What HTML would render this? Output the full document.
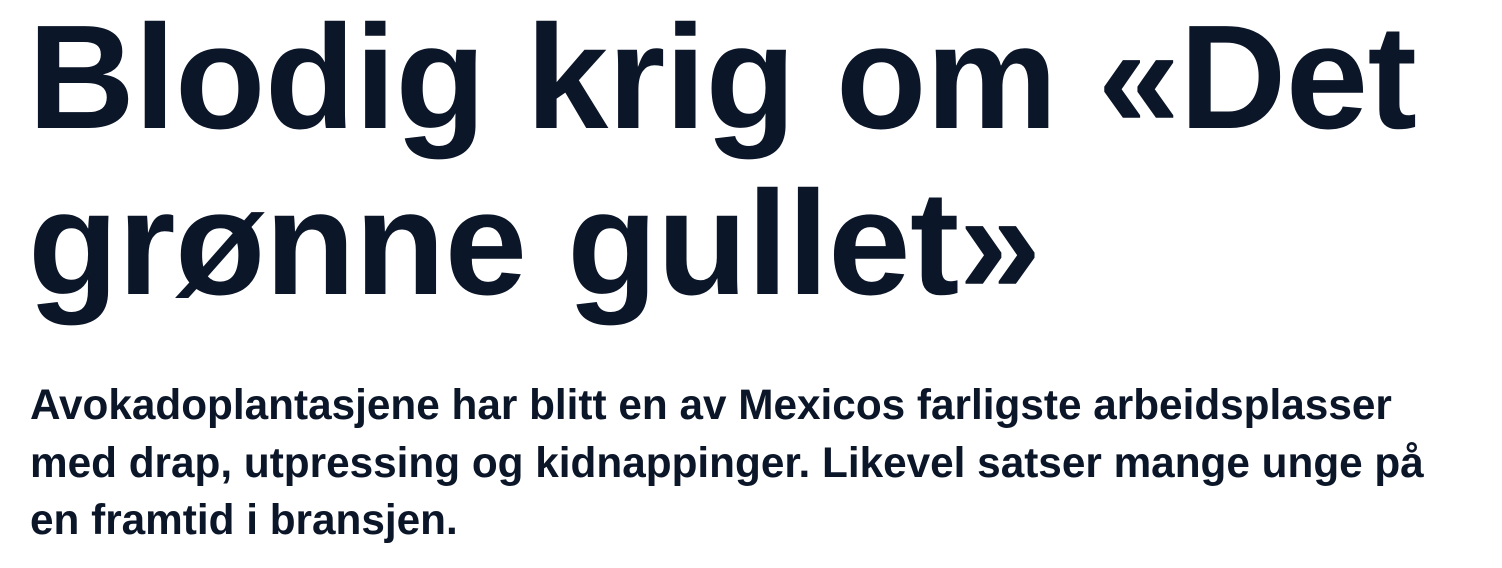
<!DOCTYPE html>
<html><head><meta charset="utf-8"><style>
html,body{margin:0;padding:0;background:#fff;width:1502px;height:568px;overflow:hidden}
h1{position:absolute;left:28px;top:-5px;margin:0;font-family:"Liberation Sans",sans-serif;font-weight:bold;font-size:148px;line-height:166px;letter-spacing:-0.5px;color:#0b1629;white-space:nowrap}
p{position:absolute;left:30px;top:376px;margin:0;font-family:"Liberation Sans",sans-serif;font-weight:bold;font-size:42.3px;line-height:57.5px;color:#0b1629;width:1480px;white-space:nowrap}
</style></head><body>
<h1>Blodig krig om «Det<br>grønne gullet»</h1>
<p>Avokadoplantasjene har blitt en av Mexicos farligste arbeidsplasser<br>med drap, utpressing og kidnappinger. Likevel satser mange unge på<br>en framtid i bransjen.</p>
</body></html>
